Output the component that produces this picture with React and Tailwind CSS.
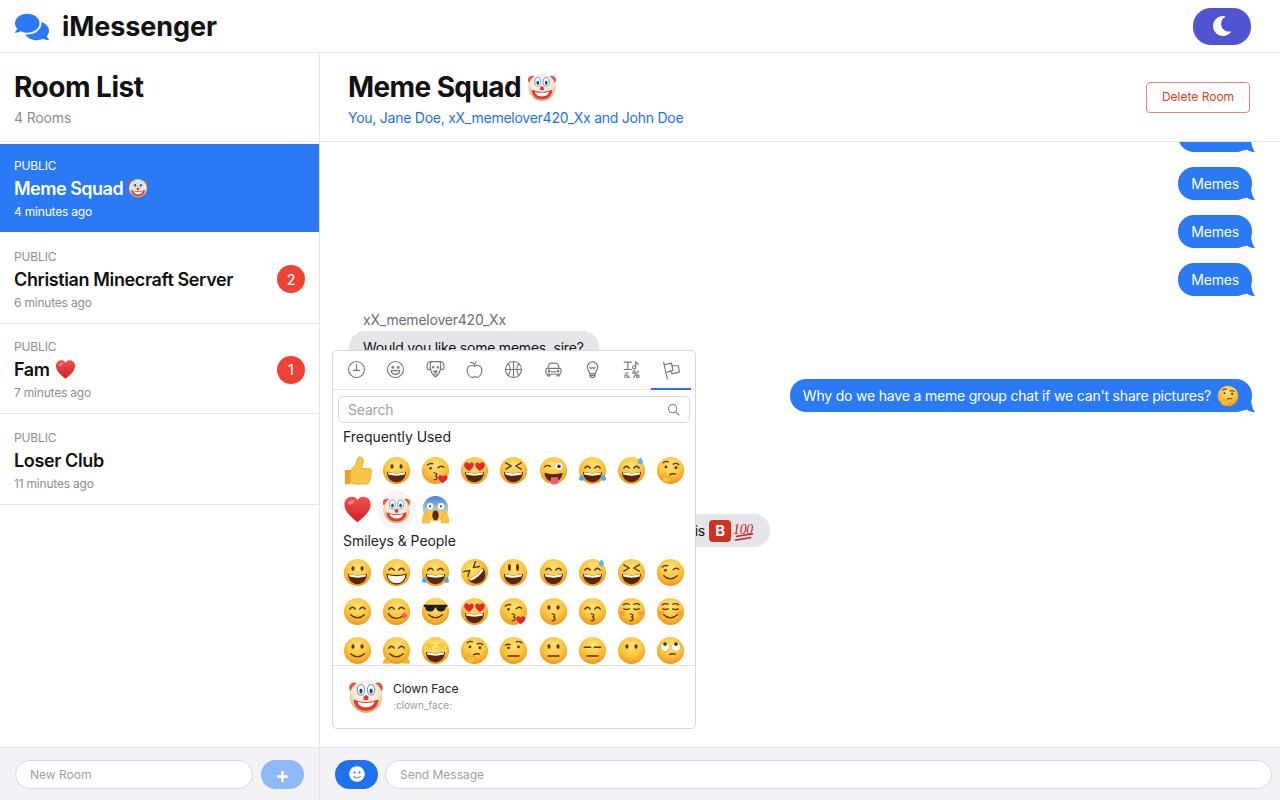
import React from 'react';
import { FaComments, FaMoon, FaPlus, FaSmile } from 'react-icons/fa';

const INK = '#5b3410';

// Pedaços reutilizáveis dos rostos dos emojis (viewBox 64x64)
const EYES = {
  dot: <g fill={INK}><ellipse cx="22" cy="23" rx="3.4" ry="5" /><ellipse cx="42" cy="23" rx="3.4" ry="5" /></g>,
  tall: <g fill={INK}><ellipse cx="23" cy="21" rx="3.2" ry="7.5" /><ellipse cx="41" cy="21" rx="3.2" ry="7.5" /></g>,
  arc: <g fill="none" stroke={INK} strokeWidth="3" strokeLinecap="round"><path d="M15 27q6-9 12 0" /><path d="M37 27q6-9 12 0" /></g>,
  x: <g fill="none" stroke={INK} strokeWidth="3" strokeLinecap="round" strokeLinejoin="round"><path d="M15 15l12 7-12 7" /><path d="M49 15l-12 7 12 7" /></g>,
  wink: <g fill="none" stroke={INK} strokeWidth="3" strokeLinecap="round"><path d="M14 20q6-5 12-3" /><path d="M38 26q6-6 12-1" /><circle cx="21" cy="27" r="3" fill={INK} stroke="none" /></g>,
  tonguewink: <g><path d="M12 24q6-6 13-1" fill="none" stroke={INK} strokeWidth="3" strokeLinecap="round" /><circle cx="44" cy="23" r="9" fill="#fff" stroke="#c98a2a" /><circle cx="44" cy="23" r="4" fill={INK} /></g>,
  closed: <g fill="none" stroke={INK} strokeWidth="3" strokeLinecap="round"><path d="M14 17q7-4 13-1" /><path d="M37 16q7-3 13 1" /><path d="M15 26q6 3 12 0" /><path d="M37 26q6 3 12 0" /></g>,
  line: <g fill="none" stroke={INK} strokeWidth="3.4" strokeLinecap="round"><path d="M14 25h14" /><path d="M36 25h14" /></g>,
  heart: <g fill="#e0263a"><path d="M20 33C10 27 8 21 10 17c3-5 9-4 10 1 2-5 8-5 10-1 2 5-2 10-10 16z" /><path d="M44 33c-8-6-12-11-10-16 2-4 8-4 10 1 1-5 7-6 10-1 2 4 0 10-10 16z" /></g>,
  shades: <g><path d="M6 17h52v4l-3 1c-1 8-6 11-13 10-6-1-8-5-9-9h-2c-1 4-3 8-9 9-7 1-12-2-13-10l-3-1z" fill="#1e1e1e" /></g>,
  roll: <g><circle cx="20" cy="24" r="10" fill="#fff" stroke="#c98a2a" /><circle cx="44" cy="24" r="10" fill="#fff" stroke="#c98a2a" /><circle cx="20" cy="18" r="4" fill={INK} /><circle cx="44" cy="18" r="4" fill={INK} /></g>,
  brow: <g fill="none" stroke={INK} strokeWidth="3" strokeLinecap="round"><path d="M14 20q6-3 11-1" /><path d="M38 13q6-3 12 2" /><circle cx="21" cy="26" r="3" fill={INK} stroke="none" /><circle cx="43" cy="24" r="3" fill={INK} stroke="none" /></g>,
  star: <g fill="#f6c834" stroke="#fff2b5" strokeWidth="1.5"><path d="M18 6l4 10 11 1-8 7 3 11-10-6-10 6 3-11-8-7 11-1z" /><path d="M46 6l4 10 11 1-8 7 3 11-10-6-10 6 3-11-8-7 11-1z" /></g>,
  think: <g fill="none" stroke={INK} strokeWidth="3" strokeLinecap="round"><path d="M16 15q5-5 11-2" /><path d="M38 18q6-4 12 1" /><circle cx="22" cy="24" r="3.2" fill={INK} stroke="none" /><circle cx="44" cy="26" r="3.2" fill={INK} stroke="none" /></g>,
};

const MOUTHS = {
  grin: <g><path d="M11 35q21 6 42 0c0 13-9 23-21 23S11 48 11 35z" fill="#5a2608" /><path d="M13 36q19 5 38 0l-1 5q-18 5-36 0z" fill="#fff" /></g>,
  toothy: <g><path d="M11 36q21 6 42 0c0 12-9 21-21 21S11 48 11 36z" fill="#fff" stroke="#5a2608" strokeWidth="2.5" /></g>,
  tongue: <g><path d="M12 37q20 6 40 0c0 11-9 20-20 20S12 48 12 37z" fill="#5a2608" /><path d="M26 47h16v9c0 5-3 7-8 7s-8-2-8-7z" fill="#ef5d7e" /></g>,
  smile: <path d="M17 39q15 14 30 0" fill="none" stroke={INK} strokeWidth="3" strokeLinecap="round" />,
  yum: <g><path d="M14 37q14 18 34 4" fill="none" stroke={INK} strokeWidth="3" strokeLinecap="round" /><path d="M42 38l9-4 5 8-8 6z" fill="#ef5d7e" /></g>,
  kiss: <path d="M29 37q8 1 5 6-1 1-3 1 6 1 4 6-2 3-6 2" fill="none" stroke={INK} strokeWidth="2.8" strokeLinecap="round" />,
  flat: <path d="M20 44h24" fill="none" stroke={INK} strokeWidth="3.4" strokeLinecap="round" />,
  small: <path d="M30 41q7-3 13-1" fill="none" stroke={INK} strokeWidth="3" strokeLinecap="round" />,
  none: null,
};

const HEART_PATH = 'M32 60C13 45 3 34 3 21 3 10 11 4 20 4c6 0 10 3 12 8 2-5 6-8 12-8 9 0 17 6 17 17 0 13-10 24-29 39z';

const EXTRAS = {
  tears: <g fill="#4aa8ec"><path d="M8 42c-5 3-7 7-5 11 3 3 9 2 10-3 1-3-2-6-5-8z" /><path d="M56 42c5 3 7 7 5 11-3 3-9 2-10-3-1-3 2-6 5-8z" /></g>,
  sweat: <path d="M52 3c-4 5-7 8-6 12 2 4 9 4 11 0 1-4-2-8-5-12z" fill="#5bb4ee" />,
  kissheart: <path d="M48 60c-7-5-11-9-10-14 1-4 7-5 10-1 3-4 9-3 10 1 2 5-3 9-10 14z" fill="#e0263a" />,
  blush: <g fill="#f2793f" opacity="0.45"><ellipse cx="12" cy="36" rx="7" ry="5" /><ellipse cx="52" cy="36" rx="7" ry="5" /></g>,
  hands: <g fill="#f7b733" stroke="#d98f1e" strokeWidth="1"><path d="M2 60l4-9 4 2 3-3 3 3 3 1-1 6H4z" /><path d="M62 60l-4-9-4 2-3-3-3 3-3 1 1 6h14z" /></g>,
  hand: <path d="M15 48l4-11 3 1-1 7 12 1c3 1 2 4 1 5 1 2 0 4-2 5 0 2-2 3-4 3H20c-4 0-6-3-6-6 0-2 0-3 1-5z" fill="#f9bd3c" stroke="#d98f1e" strokeWidth="1" />,
};

const Face = ({ eyes = 'dot', mouth = 'grin', extra, tilt = 0, size = 29 }) => (
  <svg viewBox="0 0 64 64" width={size} height={size} className="block shrink-0">
    <defs>
      <radialGradient id="faceFill" cx="50%" cy="32%" r="72%">
        <stop offset="0%" stopColor="#ffe27a" />
        <stop offset="55%" stopColor="#fbc53b" />
        <stop offset="100%" stopColor="#ea8f1c" />
      </radialGradient>
    </defs>
    {extra === 'blush' && <circle cx="32" cy="32" r="30" fill="url(#faceFill)" />}
    <g transform={`rotate(${tilt} 32 32)`}>
      {extra !== 'blush' && <circle cx="32" cy="32" r="30" fill="url(#faceFill)" />}
      {extra === 'blush' && EXTRAS.blush}
      {EYES[eyes]}
      {MOUTHS[mouth]}
    </g>
    {extra && extra !== 'blush' && EXTRAS[extra]}
  </svg>
);

const Thumbs = ({ size = 30 }) => (
  <svg viewBox="0 0 64 64" width={size} height={size} className="block shrink-0">
    <path d="M4 30h12v30H4z" fill="#e9a02c" />
    <path d="M16 30c8-5 14-15 15-25 1-5 11-4 12 3 1 7-2 14-4 19h17c6 0 7 7 3 9 3 3 2 7-1 9 2 3 1 7-2 8 1 4-2 7-6 7H27c-4 0-8-2-11-3z" fill="#f9c544" stroke="#dc9c2a" strokeWidth="1.5" />
  </svg>
);

const Heart = ({ size = 29 }) => (
  <svg viewBox="0 0 64 64" width={size} height={size} className="block shrink-0">
    <defs>
      <linearGradient id="heartFill" x1="0" y1="0" x2="0" y2="1">
        <stop offset="0%" stopColor="#f4514e" />
        <stop offset="100%" stopColor="#cf1f26" />
      </linearGradient>
    </defs>
    <path d={HEART_PATH} fill="url(#heartFill)" />
    <ellipse cx="18" cy="16" rx="7" ry="4" fill="#fff" opacity="0.35" transform="rotate(-25 18 16)" />
  </svg>
);

const Clown = ({ size = 29 }) => (
  <svg viewBox="0 0 64 64" width={size} height={size} className="block shrink-0">
    <defs>
      <radialGradient id="clownFill" cx="50%" cy="32%" r="72%">
        <stop offset="0%" stopColor="#ffffff" />
        <stop offset="60%" stopColor="#f6e5cc" />
        <stop offset="100%" stopColor="#cf9a5c" />
      </radialGradient>
    </defs>
    <circle cx="11" cy="17" r="9" fill="#dd5a45" />
    <circle cx="53" cy="17" r="9" fill="#dd5a45" />
    <circle cx="32" cy="33" r="29" fill="url(#clownFill)" />
    <ellipse cx="23" cy="21" rx="6.5" ry="9.5" fill="#fff" stroke="#5d9bd6" strokeWidth="2" />
    <ellipse cx="41" cy="21" rx="6.5" ry="9.5" fill="#fff" stroke="#5d9bd6" strokeWidth="2" />
    <ellipse cx="23" cy="23" rx="2.8" ry="4.5" fill="#33415c" />
    <ellipse cx="41" cy="23" rx="2.8" ry="4.5" fill="#33415c" />
    <path d="M10 38q22 9 44 0c0 12-9 20-22 20S10 50 10 38z" fill="#e23b32" />
    <path d="M17 42q15 5 30 0c-1 6-7 10-15 10s-14-4-15-10z" fill="#fff" />
    <circle cx="32" cy="35" r="4.5" fill="#e23b32" />
  </svg>
);

const Scream = ({ size = 29 }) => (
  <svg viewBox="0 0 64 64" width={size} height={size} className="block shrink-0">
    <defs>
      <linearGradient id="screamFill" x1="0" y1="0" x2="0" y2="1">
        <stop offset="0%" stopColor="#3f7fd6" />
        <stop offset="50%" stopColor="#a9c4c8" />
        <stop offset="70%" stopColor="#fcc83f" />
      </linearGradient>
    </defs>
    <circle cx="32" cy="30" r="28" fill="url(#screamFill)" />
    <ellipse cx="20" cy="25" rx="7" ry="7.5" fill="#fff" />
    <ellipse cx="44" cy="25" rx="7" ry="7.5" fill="#fff" />
    <circle cx="20" cy="25" r="2.4" fill={INK} />
    <circle cx="44" cy="25" r="2.4" fill={INK} />
    <ellipse cx="32" cy="45" rx="7" ry="11" fill="#5a2608" />
    <path d="M3 62c-1-10 2-20 7-24 5 3 8 10 10 24z" fill="#f9c544" stroke="#dc9c2a" />
    <path d="M61 62c1-10-2-20-7-24-5 3-8 10-10 24z" fill="#f9c544" stroke="#dc9c2a" />
  </svg>
);

const Hundred = () => (
  <svg viewBox="0 0 24 24" width="22" height="22" className="block shrink-0">
    <text x="0" y="15" fontFamily="Liberation Serif, serif" fontStyle="italic" fontSize="15" fill="#c8202a">100</text>
    <path d="M3 18l19-3M2 22l18-3" stroke="#c8202a" strokeWidth="1.6" />
  </svg>
);

// Ícones das abas do seletor de emoji
const TabIcon = ({ children }) => (
  <svg viewBox="0 0 20 20" width="21" height="21" fill="none" stroke="#787878" strokeWidth="1.1" strokeLinecap="round" strokeLinejoin="round">
    {children}
  </svg>
);

const TABS = [
  <TabIcon><circle cx="10" cy="10" r="7.6" /><path d="M10 5.2v5.6M7.2 10.8h5.6" /></TabIcon>,
  <TabIcon><circle cx="10" cy="10" r="7.6" /><circle cx="7.4" cy="8" r="0.8" /><circle cx="12.6" cy="8" r="0.8" /><path d="M5.8 11h8.4c-.4 2.4-2 3.6-4.2 3.6S6.2 13.4 5.8 11z" /></TabIcon>,
  <TabIcon><path d="M6 2.5C3 2.2 1.2 5 2 8.5c.5 2.2 2.7 2.3 3.3.3" /><path d="M14 2.500c3-.3 4.800 2.500 4 6-.5 2.200-2.700 2.300-3.300.3" /><path d="M6 2.500h8c1.500 1.500 1.100 5 .7 7-.6 3.300-2 6.300-4.700 7.500-2.700-1.200-4.100-4.200-4.700-7.500C4.900 7.500 4.500 4 6 2.500z" /><path d="M8.300 11.500h3.400L10 13.200z" fill="#787878" /><path d="M8.500 14.300c.5 1.300 2.500 1.300 3 0" /><circle cx="7.800" cy="7.800" r=".6" fill="#787878" /><circle cx="12.200" cy="7.800" r=".6" fill="#787878" /></TabIcon>,
  <TabIcon><path d="M10 7C7.500 5.500 3.200 6 3 10.500c-.1 4 2.700 7 4.500 7 1 0 1.500-.5 2.500-.5s1.500.5 2.500.5c1.800 0 4.600-3 4.500-7C16.800 6 12.500 5.500 10 7z" /><path d="M10 7c0-2 .5-3.500 1.500-4.500M10 5C9 3.800 7.500 3.200 6 3.200" /></TabIcon>,
  <TabIcon><circle cx="10" cy="10" r="7.6" /><path d="M2.400 10h15.200M10 2.400v15.200M5 4.300c2.400 3 2.400 8.400 0 11.400M15 4.300c-2.400 3-2.400 8.400 0 11.400" /></TabIcon>,
  <TabIcon><path d="M4.500 9l1.300-3.700C6.100 4.500 6.800 4 7.600 4h4.800c.8 0 1.500.5 1.800 1.300L15.500 9" /><rect x="2.800" y="9" width="14.400" height="5.500" rx="1.800" /><path d="M4.500 14.500V16h2v-1.500M13.500 14.500V16h2v-1.500M8 12.200h4" /><circle cx="5.800" cy="11.700" r=".8" /><circle cx="14.200" cy="11.700" r=".8" /></TabIcon>,
  <TabIcon><path d="M7.500 14c0-1.800-2.500-3-2.500-6.200a5 5 0 0 1 10 0c0 3.200-2.500 4.400-2.500 6.200z" /><path d="M7.500 14h5v2c0 1-1 1.800-2.500 1.800S7.500 17 7.500 16zM7.500 15.800h5M7.500 8l1.200 1.200L10 8l1.300 1.200L12.500 8" /></TabIcon>,
  <TabIcon><path d="M3 3h7M6.500 3v6M3 10h7" /><path d="M14 2.500v5.500a1.500 1.500 0 1 1-1-1.400M14 2.500c.5 1.200 2 1.400 2.500 2.800" /><text x="2.500" y="18" fontSize="9" fontFamily="Liberation Sans, sans-serif" fill="#787878" stroke="none">&amp;</text><path d="M16.500 11.500l-4.500 6" /><circle cx="12.500" cy="12.500" r="1.200" /><circle cx="16" cy="16.500" r="1.200" /></TabIcon>,
  <TabIcon><path d="M2.500 2l3.500 16" /><path d="M3.500 4.500L10 3l1.500 7-6 1.500" /><path d="M10.500 5.500h6l1 6-7 1.500-1.500-2.800" /></TabIcon>,
];

const THINK = <Face eyes="think" mouth="small" extra="hand" />;

const FREQUENT = [
  <Thumbs />, <Face />, <Face eyes="wink" mouth="kiss" extra="kissheart" />, <Face eyes="heart" />, <Face eyes="x" />,
  <Face eyes="tonguewink" mouth="tongue" />, <Face eyes="arc" extra="tears" />, <Face eyes="arc" extra="sweat" />,
  THINK, <Heart />, <Clown />, <Scream />,
];

const SMILEYS = [
  <Face />, <Face eyes="arc" mouth="toothy" />, <Face eyes="arc" extra="tears" />, <Face eyes="x" tilt={-40} />, <Face eyes="tall" />,
  <Face eyes="arc" />, <Face eyes="arc" extra="sweat" />, <Face eyes="x" />, <Face eyes="wink" mouth="smile" />,
  <Face eyes="arc" mouth="smile" />, <Face eyes="arc" mouth="yum" />, <Face eyes="shades" mouth="smile" />, <Face eyes="heart" />,
  <Face eyes="wink" mouth="kiss" extra="kissheart" />, <Face mouth="kiss" />, <Face eyes="arc" mouth="kiss" />,
  <Face eyes="closed" mouth="kiss" extra="blush" />, <Face eyes="closed" mouth="smile" extra="blush" />,
  <Face mouth="smile" />, <Face eyes="arc" mouth="smile" extra="hands" />, <Face eyes="star" />, THINK,
  <Face eyes="brow" mouth="flat" />, <Face mouth="flat" />, <Face eyes="line" mouth="flat" />, <Face mouth="none" />, <Face eyes="roll" mouth="small" />,
];

const EmojiGrid = ({ items, hovered }) => (
  <div className="grid grid-cols-[repeat(9,39.1px)] auto-rows-[39px]">
    {items.map((item, i) => (
      <div key={i} className="flex items-center justify-center">
        <div className={`w-[38px] h-[38px] rounded-full flex items-center justify-center ${i === hovered ? 'bg-[#f4f4f4]' : ''}`}>
          {item}
        </div>
      </div>
    ))}
  </div>
);

const EmojiPicker = () => (
  <div className="absolute left-[12px] top-[208px] w-[364px] h-[379px] bg-white border border-[#d9d9d9] rounded-[5px] flex flex-col overflow-hidden z-10">
    <div className="h-[39px] flex px-[4px] border-b border-[#e8e8e8] shrink-0">
      {TABS.map((icon, i) => (
        <div key={i} className={`w-[39.3px] flex items-center justify-center ${i === 8 ? 'border-b-2 border-[#2a73e0] -mb-px pt-[1px]' : 'pb-[1px]'}`}>
          {icon}
        </div>
      ))}
    </div>
    <div className="flex-1 min-h-0 overflow-hidden px-[5px] pt-[6px]">
      <div className="h-[27px] border border-[#d9d9d9] rounded-[5px] flex items-center justify-between pl-[9px] pr-[9px]">
        <span className="text-[14px] tracking-[-0.2px] text-[#a3a3a3] pb-[1px]">Search</span>
        <svg viewBox="0 0 14 14" width="13" height="13" fill="none" stroke="#7f7f7f" strokeWidth="1.1" strokeLinecap="round">
          <circle cx="6" cy="6" r="4.5" />
          <path d="M9.5 9.5l3.500 3.500" />
        </svg>
      </div>
      <div className="text-[14px] leading-[20px] tracking-[-0.05px] text-[#222427] pl-[5px] mt-[4px] mb-[4px]">Frequently Used</div>
      <EmojiGrid items={FREQUENT} hovered={10} />
      <div className="text-[14px] leading-[20px] tracking-[-0.05px] text-[#222427] pl-[5px] mt-[2px] mb-[2px]">Smileys &amp; People</div>
      <EmojiGrid items={SMILEYS} />
    </div>
    <div className="h-[63px] border-t border-[#e0e0e0] shrink-0 flex items-start pl-[15px] pt-[13px] gap-[9px]">
      <div className="-mt-[1px]"><Clown size={36} /></div>
      <div className="flex flex-col mt-[1px]">
        <span className="text-[12px] leading-[17px] tracking-[-0.1px] text-[#222427]">Clown Face</span>
        <span className="text-[10px] leading-[14px] text-[#999] mt-[1px]">:clown_face:</span>
      </div>
    </div>
  </div>
);

const Tail = () => (
  <svg viewBox="0 0 12 12" width="12" height="12" className="absolute right-[-3px] bottom-0">
    <path d="M8 0c.4 4.500 1.500 9 4 12-3 0-6-.6-8-2.500L0 11z" fill="#2b7af5" />
  </svg>
);

const Mine = ({ children, className = '' }) => (
  <div className={`self-end relative bg-[#2b7af5] text-white text-[14px] tracking-[-0.19px] leading-[33px] h-[33px] rounded-[16px] px-[13px] pt-[0.5px] flex items-center gap-[6px] ${className}`}>
    {children}
    <Tail />
  </div>
);

const Theirs = ({ children, className = '' }) => (
  <div className={`self-start bg-[#e5e5ea] text-[#111] text-[14px] tracking-[-0.22px] leading-[33px] h-[33px] rounded-[16px] pl-[14px] pr-[15px] flex items-center gap-[4px] whitespace-nowrap ${className}`}>
    {children}
  </div>
);

const ROOMS = [
  { name: 'Christian Minecraft Server', time: '6 minutes ago', unread: 2 },
  { name: 'Fam', emoji: <Heart size={21} />, time: '7 minutes ago', unread: 1 },
  { name: 'Loser Club', time: '11 minutes ago' },
];

const RoomRow = ({ room }) => (
  <div className="h-[90.5px] border-b border-[#e5e5ea] px-[14px] pt-[3px] flex items-center justify-between">
    <div className="flex flex-col">
      <span className="text-[12px] leading-[23px] tracking-[-0.15px] text-[#8e8e93]">PUBLIC</span>
      <span className="text-[18px] leading-[23px] font-semibold tracking-[-0.38px] text-[#111] flex items-center gap-[5px]">{room.name}{room.emoji}</span>
      <span className="text-[12px] leading-[23px] tracking-[-0.2px] text-[#8e8e93]">{room.time}</span>
    </div>
    {room.unread && (
      <div className="w-[28px] h-[28px] rounded-full bg-[#ee4235] text-white text-[14px] font-medium flex items-center justify-center">{room.unread}</div>
    )}
  </div>
);

const App = () => {
  return (
    <div className="w-full h-screen bg-white flex flex-col overflow-hidden font-['Inter',sans-serif]">
      <header className="h-[53px] shrink-0 border-b border-[#e9e9ee] flex items-center justify-between pl-[15px] pr-[29px]">
        <div className="flex items-center gap-[13px] pt-[2px]">
          <FaComments size={34} color="#2b7af5" />
          <span className="text-[27px] font-bold text-[#111] tracking-[-0.1px]">iMessenger</span>
        </div>
        <button className="w-[58px] h-[37px] rounded-[18px] bg-[#5154d0] flex items-center justify-center">
          <FaMoon size={20} color="white" />
        </button>
      </header>

      <div className="flex-1 min-h-0 flex">
        <aside className="w-[320px] shrink-0 border-r border-[#e5e5ea] flex flex-col">
          <div className="h-[89px] shrink-0 border-b border-[#e5e5ea] px-[14px] pt-[4px] flex flex-col justify-center">
            <h1 className="text-[28px] leading-[36px] font-bold tracking-[-0.5px] text-[#111]">Room List</h1>
            <p className="text-[14px] leading-[22px] tracking-[-0.15px] text-[#8e8e93] mt-[2px]">4 Rooms</p>
          </div>
          <div className="flex-1 min-h-0">
            <div className="mt-[2px] mb-[1px] h-[88px] bg-[#2b7af5] text-white px-[14px] flex flex-col justify-center">
              <span className="text-[12px] leading-[23px] tracking-[-0.15px]">PUBLIC</span>
              <span className="text-[18px] leading-[23px] font-semibold tracking-[-0.5px] flex items-center gap-[5px]">Meme Squad <Clown size={20} /></span>
              <span className="text-[12px] leading-[23px] tracking-[-0.2px]">4 minutes ago</span>
            </div>
            {ROOMS.map((room) => <RoomRow key={room.name} room={room} />)}
          </div>
          <div className="h-[53px] shrink-0 bg-[#f2f2f7] border-t border-[#e5e5ea] flex items-center pl-[15px] gap-[8px]">
            <input placeholder="New Room" className="w-[238px] h-[29px] rounded-full bg-white border border-[#d9d9de] px-[14px] text-[12px] placeholder:text-[#a0a0a5] outline-none" />
            <button className="w-[43px] h-[29px] rounded-full bg-[#8fb8f8] flex items-center justify-center pt-[5px]">
              <FaPlus size={13} color="white" />
            </button>
          </div>
        </aside>

        <main className="flex-1 min-w-0 flex flex-col">
          <div className="h-[89px] shrink-0 border-b border-[#e5e5ea] pl-[28px] pr-[30px] flex items-center justify-between relative z-20 bg-white">
            <div className="pt-[4px]">
              <h2 className="text-[28px] leading-[36px] font-bold tracking-[-0.6px] text-[#111] flex items-center gap-[6px]">Meme Squad <Clown size={30} /></h2>
              <p className="text-[14px] leading-[22px] tracking-[-0.25px] text-[#1a73e8] mt-[2px]">You, Jane Doe, xX_memelover420_Xx and John Doe</p>
            </div>
            <button className="w-[104px] h-[31px] rounded-[4px] border border-[#e9837c] text-[#e5392d] text-[12px] bg-white">Delete Room</button>
          </div>

          <div className="flex-1 min-h-0 relative overflow-hidden pl-[29px] pr-[28px] flex flex-col">
            <Mine className="-mt-[23px]">Memes</Mine>
            <Mine className="mt-[15px]">Memes</Mine>
            <Mine className="mt-[15px]">Memes</Mine>
            <Mine className="mt-[15px]">Memes</Mine>
            <div className="text-[14px] leading-[20px] tracking-[-0.22px] text-[#6e6e73] pl-[14px] mt-[14px] mb-[1px]">xX_memelover420_Xx</div>
            <Theirs>Would you like some memes, sire?</Theirs>
            <Mine className="mt-[15px]">
              Why do we have a meme group chat if we can't share pictures?
              <Face eyes="think" mouth="small" extra="hand" size={22} />
            </Mine>
            <Theirs className="mt-[102px] w-[421px] justify-end">
              is
              <span className="w-[22px] h-[22px] rounded-[4px] bg-[#d1311f] text-white text-[15px] font-bold flex items-center justify-center -mr-[2px]">B</span>
              <Hundred />
            </Theirs>
            <EmojiPicker />
          </div>

          <div className="h-[53px] shrink-0 bg-[#f2f2f7] border-t border-[#e5e5ea] flex items-center pl-[15px] pr-[8px] gap-[7px]">
            <button className="w-[43px] h-[29px] shrink-0 rounded-full bg-[#1f72ea] flex items-center justify-center">
              <FaSmile size={16} color="white" />
            </button>
            <input placeholder="Send Message" className="flex-1 h-[29px] rounded-full bg-white border border-[#d9d9de] px-[14px] text-[12px] placeholder:text-[#a0a0a5] outline-none" />
          </div>
        </main>
      </div>
    </div>
  );
};

export default App;
